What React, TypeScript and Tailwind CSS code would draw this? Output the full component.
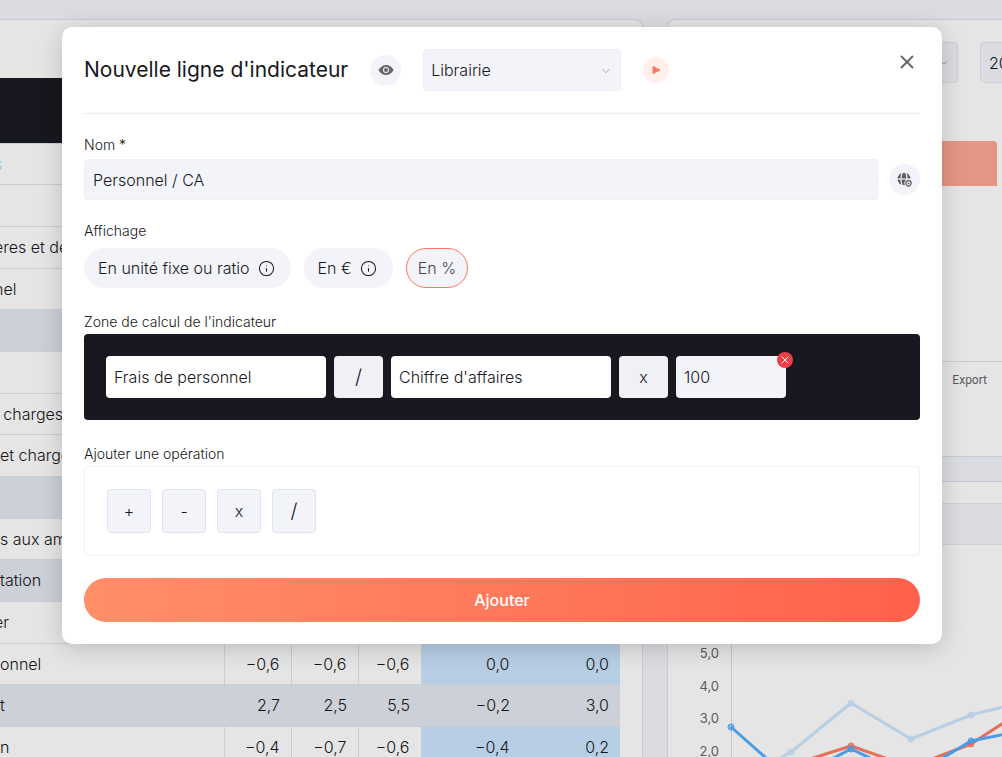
import { useState } from "react";
import { ChevronDown, Info, X } from "lucide-react";
import { IoEye } from "react-icons/io5";

interface Row {
  label: string;
  values?: string[];
  total?: boolean;
  link?: boolean;
  clipped?: boolean;
}

const rows: Row[] = [
  { label: "s", link: true, clipped: true },
  { label: "" },
  { label: "ères et dé", clipped: true },
  { label: "nel", clipped: true },
  { label: "", total: true },
  { label: "" },
  { label: "t charges", clipped: true },
  { label: "et charges" },
  { label: "", total: true },
  { label: "s aux am" },
  { label: "tation", total: true },
  { label: "er", clipped: true },
  { label: "onnel", values: ["−0,6", "−0,6", "−0,6", "0,0", "0,0"] },
  { label: "t", values: ["2,7", "2,5", "5,5", "−0,2", "3,0"], total: true },
  { label: "n", values: ["−0,4", "−0,7", "−0,6", "−0,4", "0,2"] },
];

const series = [
  { color: "#cce6ff", points: [[63, 242], [123, 207], [183, 158], [243, 194], [303, 170], [363, 155]] },
  { color: "#ff7c64", points: [[63, 262], [123, 220], [183, 201], [243, 222], [303, 199], [363, 160]] },
  { color: "#52aeff", points: [[63, 182], [123, 235], [183, 204], [243, 232], [303, 196], [363, 184]] },
];

const ticks = [
  { label: "5,0", y: 113 },
  { label: "4,0", y: 146 },
  { label: "3,0", y: 178 },
  { label: "2,0", y: 211 },
];

const displayModes = [
  { id: "fixed", label: "En unité fixe ou ratio", info: true },
  { id: "euro", label: "En €", info: true },
  { id: "percent", label: "En %", info: false },
];

const operations = ["+", "-", "x", "/"];

function GlobeIcon() {
  return (
    <svg width="16" height="16" viewBox="0 0 16 16" fill="none" aria-hidden="true">
      <circle cx="7" cy="7" r="6.5" fill="#5c5c62" />
      <path d="M0 7h14" stroke="#f3f4fa" strokeWidth="1.2" />
      <ellipse cx="7" cy="7" rx="3" ry="7.4" stroke="#f3f4fa" strokeWidth="1.2" />
      <path
        d="M11.5 14.8c-2-1.200-3-2.300-3-3.700a3 3 0 0 1 6 0c0 1.400-1 2.500-3 3.700z"
        fill="#f3f4fa"
        stroke="#f3f4fa"
        strokeWidth="2.400"
      />
      <path
        d="M11.500 14.500c-1.800-1-2.700-2-2.700-3.200a2.700 2.700 0 0 1 5.400 0c0 1.200-.9 2.200-2.700 3.200z"
        stroke="#5c5c62"
        strokeWidth="1.200"
      />
      <circle cx="11.500" cy="11.300" r="0.900" fill="#5c5c62" />
    </svg>
  );
}

function IndicatorTable() {
  return (
    <section className="overflow-hidden rounded-tr-lg border-t border-r border-[#dfe2ec] bg-white pt-[58px] pr-[22px]">
      <table className="w-full table-fixed border-collapse text-base font-light whitespace-nowrap">
        <colgroup>
          <col />
          <col className="w-[67px]" />
          <col className="w-[67px]" />
          <col className="w-[63px]" />
          <col className="w-[100px]" />
          <col className="w-[99px]" />
        </colgroup>
        <thead>
          <tr className="h-[65px] bg-[#1a1a23]">
            <th colSpan={6} />
          </tr>
        </thead>
        <tbody>
          {rows.map((row, i) => (
            <tr
              key={i}
              className={`h-[42px] border-t border-[#e0e4ed] nth-[3n+1]:h-[41px] ${row.total ? "bg-[#e3e8f2]" : ""}`}
            >
              <td
                className={`overflow-hidden p-0 ${row.link ? "text-[#9bdcff]" : ""} ${
                  row.clipped ? "-indent-1.5" : ""
                }`}
              >
                {row.label}
              </td>
              {[0, 1, 2, 3, 4].map((col) => (
                <td
                  key={col}
                  className={`p-0 pr-[11px] text-right ${row.total ? "" : "border-l border-[#e0e4ed]"} ${
                    !row.total && col > 2 ? "bg-[#cce6ff]" : ""
                  }`}
                >
                  {row.values?.[col]}
                </td>
              ))}
            </tr>
          ))}
        </tbody>
      </table>
    </section>
  );
}

function TrendChart() {
  return (
    <svg width="334" height="212" className="block">
      <path d="M63.500 0V212" stroke="#dcdee3" />
      {ticks.map((tick) => (
        <text key={tick.label} x="51" y={tick.y} textAnchor="end" fontSize="13" fill="#66666b">
          {tick.label}
        </text>
      ))}
      {series.map((line) => (
        <g key={line.color} stroke={line.color}>
          <polyline points={line.points.join(" ")} fill="none" strokeWidth="3" strokeLinejoin="round" />
          {line.points.map(([x, y]) => (
            <circle key={x} cx={x} cy={y} r="3" fill={line.color} fillOpacity="0.6" />
          ))}
        </g>
      ))}
    </svg>
  );
}

function SidePanels() {
  return (
    <div className="flex min-w-0 flex-col gap-6">
      <section className="h-[438px] shrink-0 overflow-hidden rounded-tl-lg border border-r-0 border-[#dfe2ec] bg-white pt-[22px]">
        <div className="flex h-[41px] gap-[22px] pl-[22px]">
          <div className="flex w-[268px] shrink-0 items-center justify-end rounded border border-[#e6e8f0] bg-[#f4f5fb] pr-2">
            <ChevronDown size={10} className="text-[#88888c]" />
          </div>
          <div className="flex w-[120px] shrink-0 items-center rounded border border-[#e6e8f0] bg-[#f4f5fb] pl-2 font-light">
            2024
          </div>
        </div>
        <div className="mt-[58px] mr-[5px] ml-[22px] h-[45px] rounded-t bg-[#ffa694]" />
        <div className="mt-[175px] flex h-9 items-center justify-end border-t border-[#dfe2ec] pr-[15px] font-[Roboto] text-xs text-[#66666b]">
          Export
        </div>
      </section>
      <section className="flex-1 overflow-hidden rounded-tl-lg border-t border-l border-[#dfe2ec] bg-white pt-[21px]">
        <div className="h-[42px] border-y border-[#e6e8f0] bg-[#f4f5fb]" />
        <TrendChart />
      </section>
    </div>
  );
}

function IndicatorDialog() {
  const [name, setName] = useState("Personnel / CA");
  const [mode, setMode] = useState("percent");
  const [left, setLeft] = useState("Frais de personnel");
  const [right, setRight] = useState("Chiffre d'affaires");
  const [factor, setFactor] = useState("100");

  return (
    <div
      role="dialog"
      aria-labelledby="dialog-title"
      className="w-full rounded-[10px] bg-white p-[22px] shadow-[0_4px_24px_rgba(0,0,0,0.18)]"
    >
      <header className="flex items-center gap-[22px] border-b border-[#ededf0] pb-[22px]">
        <h1 id="dialog-title" className="text-[21px] leading-7 whitespace-nowrap">
          Nouvelle ligne d'indicateur
        </h1>
        <button
          type="button"
          aria-label="Aperçu"
          className="flex size-[31px] items-center justify-center rounded-full bg-[#f3f4fa] text-[#66666b]"
        >
          <IoEye size={16} />
        </button>
        <div className="relative">
          <select
            aria-label="Secteur"
            className="block h-[42px] w-[198px] appearance-none rounded border border-[#eeeff5] bg-[#f3f4fa] px-[7px] text-base font-light outline-none"
          >
            <option>Librairie</option>
          </select>
          <ChevronDown
            size={14}
            strokeWidth={1.5}
            className="pointer-events-none absolute top-[15px] right-2 text-[#a5a5aa]"
          />
        </div>
        <button
          type="button"
          aria-label="Lancer"
          className="flex size-[26px] items-center justify-center rounded-full bg-[#fff0ea]"
        >
          <svg width="10" height="10" viewBox="0 0 10 10" aria-hidden="true">
            <path d="M2 1.500v7l7-3.500z" fill="#ff7a5c" stroke="#ff7a5c" strokeLinejoin="round" />
          </svg>
        </button>
        <button type="button" aria-label="Fermer" className="mr-0.5 mb-4 ml-auto text-[#66666b]">
          <X size={22} strokeWidth={2} />
        </button>
      </header>

      <div className="mt-[21px]">
        <label htmlFor="name" className="mb-1 block text-sm leading-5 font-light">
          Nom *
        </label>
        <div className="flex items-center gap-[11px]">
          <input
            id="name"
            value={name}
            onChange={(e) => setName(e.target.value)}
            className="h-[41px] min-w-0 flex-1 rounded border border-[#eeeff5] bg-[#f3f4fa] px-2 text-base font-light outline-none"
          />
          <button
            type="button"
            aria-label="Traductions"
            className="flex size-[31px] items-center justify-center rounded-full bg-[#f3f4fa]"
          >
            <GlobeIcon />
          </button>
        </div>
      </div>

      <fieldset className="mt-[21px]">
        <legend className="mb-[7px] text-sm leading-5 font-light">Affichage</legend>
        <div className="flex gap-[13px]">
          {displayModes.map((item) => (
            <label
              key={item.id}
              className={`flex h-10 cursor-pointer items-center gap-2 rounded-full border bg-[#f3f4fa] text-base font-light ${
                item.info ? "pr-[15px] pl-[13px]" : "px-[11px]"
              } ${mode === item.id ? "border-[#ff7a5c] text-[#45454c]" : "border-[#f3f4fa]"}`}
            >
              <input
                type="radio"
                name="display"
                checked={mode === item.id}
                onChange={() => setMode(item.id)}
                className="sr-only"
              />
              {item.label}
              {item.info && <Info size={17} strokeWidth={1.5} />}
            </label>
          ))}
        </div>
      </fieldset>

      <div className="mt-6">
        <h2 className="mb-0.5 text-sm leading-5 font-light">Zone de calcul de l'indicateur</h2>
        <div className="flex gap-2 rounded bg-[#181820] p-[22px] text-base font-light">
          <input
            aria-label="Premier terme"
            value={left}
            onChange={(e) => setLeft(e.target.value)}
            className="h-[42px] w-[220px] rounded bg-white px-2 outline-none"
          />
          <span className="flex w-[49px] items-center justify-center rounded bg-[#f0f1f5] text-xl">/</span>
          <input
            aria-label="Second terme"
            value={right}
            onChange={(e) => setRight(e.target.value)}
            className="h-[42px] w-[220px] rounded bg-white px-2 outline-none"
          />
          <span className="flex w-[49px] items-center justify-center rounded bg-[#f0f1f5]">x</span>
          <div className="relative">
            <input
              aria-label="Facteur"
              value={factor}
              onChange={(e) => setFactor(e.target.value)}
              className="block h-[42px] w-[110px] rounded bg-[#f3f4fa] px-2 outline-none"
            />
            <button
              type="button"
              aria-label="Supprimer"
              className="absolute -top-1 -right-[7px] flex size-4 items-center justify-center rounded-full bg-[#f03e46] text-white"
            >
              <X size={12} strokeWidth={2} />
            </button>
          </div>
        </div>
      </div>

      <div className="mt-6">
        <h2 className="mb-0.5 text-sm leading-5 font-light">Ajouter une opération</h2>
        <div className="flex gap-[11px] rounded border border-[#f0f0f2] p-[22px]">
          {operations.map((op) => (
            <button
              key={op}
              type="button"
              className={`size-11 rounded border border-[#e0e4ee] bg-[#f3f4fa] font-light ${
                op === "/" ? "text-xl" : "text-base"
              }`}
            >
              {op}
            </button>
          ))}
        </div>
      </div>

      <button
        type="button"
        className="mt-[22px] h-11 w-full rounded-full bg-linear-to-r from-[#ff8e69] to-[#ff614b] text-base font-medium text-white"
      >
        Ajouter
      </button>
    </div>
  );
}

export default function App() {
  return (
    <div className="relative h-screen overflow-hidden bg-[#f4f5fb] font-[Inter,sans-serif] text-[#181820]">
      <main className="grid h-full grid-cols-[643fr_335fr] gap-6 pt-[19px]">
        <IndicatorTable />
        <SidePanels />
      </main>
      <div className="absolute inset-0 flex items-start bg-black/10 pt-[27px] pr-[60px] pl-[62px]">
        <IndicatorDialog />
      </div>
    </div>
  );
}
